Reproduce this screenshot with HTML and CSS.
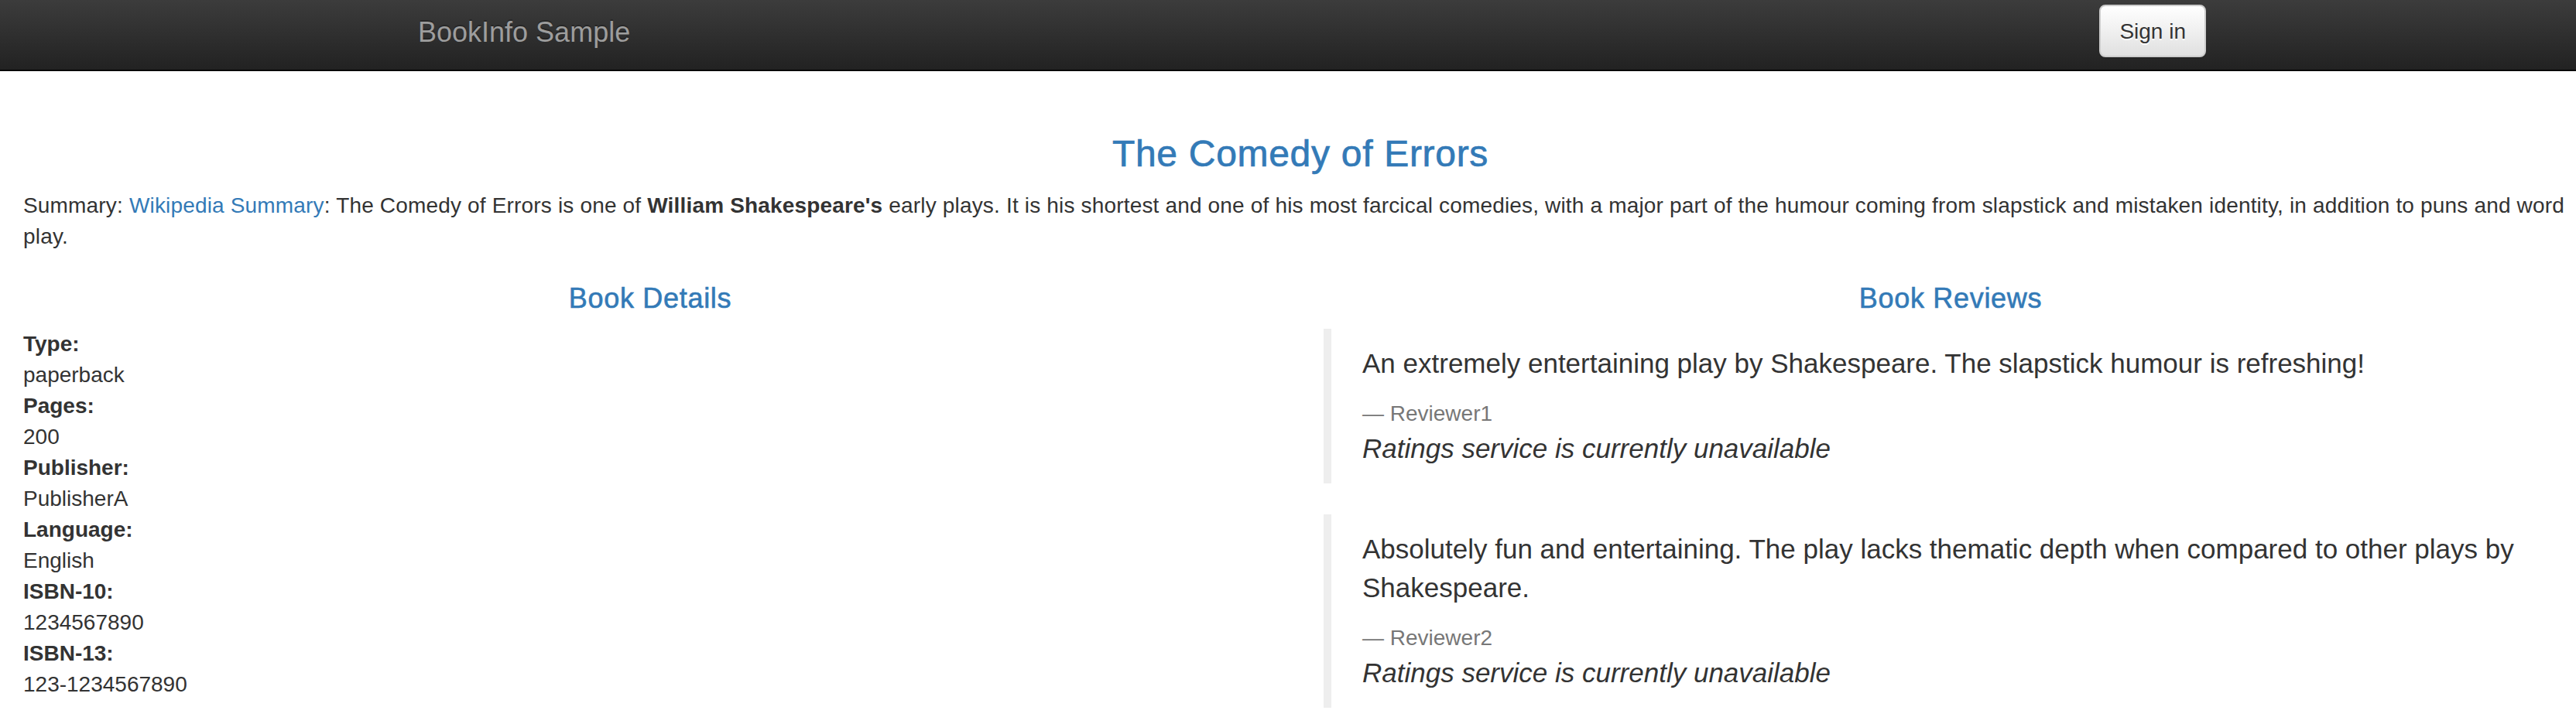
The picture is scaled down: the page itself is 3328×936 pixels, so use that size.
FILE: index.html
```html
<!DOCTYPE html>
<html lang="en">
<head>
<meta charset="utf-8">
<title>Simple Bookstore App</title>
<link rel="stylesheet" href="styles.css">
</head>
<body>
<nav class="navbar">
  <div class="nav-container">
    <a class="navbar-brand" href="#">BookInfo Sample</a>
    <button type="button" class="btn-signin">Sign in</button>
  </div>
</nav>
<main class="page">
  <section class="intro">
    <h3 class="title">The Comedy of Errors</h3>
    <p class="summary">Summary: <a href="#">Wikipedia Summary</a>: The Comedy of Errors is one of <b>William Shakespeare's</b> early plays. It is his shortest and one of his most farcical comedies, with a major part of the humour coming from slapstick and mistaken identity, in addition to puns and word play.</p>
  </section>
  <div class="columns">
    <section class="details">
      <h4 class="section-title">Book Details</h4>
      <dl class="detail-list">
        <dt>Type:</dt><dd>paperback</dd>
        <dt>Pages:</dt><dd>200</dd>
        <dt>Publisher:</dt><dd>PublisherA</dd>
        <dt>Language:</dt><dd>English</dd>
        <dt>ISBN-10:</dt><dd>1234567890</dd>
        <dt>ISBN-13:</dt><dd>123-1234567890</dd>
      </dl>
    </section>
    <section class="reviews">
      <h4 class="section-title">Book Reviews</h4>
      <blockquote class="review">
        <p>An extremely entertaining play by Shakespeare. The slapstick humour is refreshing!</p>
        <small class="reviewer">Reviewer1</small>
        <p class="rating"><i>Ratings service is currently unavailable</i></p>
      </blockquote>
      <blockquote class="review">
        <p>Absolutely fun and entertaining. The play lacks thematic depth when compared to other plays by Shakespeare.</p>
        <small class="reviewer">Reviewer2</small>
        <p class="rating"><i>Ratings service is currently unavailable</i></p>
      </blockquote>
    </section>
  </div>
</main>
</body>
</html>
```
FILE: styles.css
```css
html {
  overflow: hidden;
}

body {
  margin: 0;
  width: 3360px;
  font-family: "Liberation Sans", Arial, Helvetica, sans-serif;
  font-size: 28px;
  line-height: 40px;
  color: #333;
  background: #fff;
}

.navbar {
  height: 90px;
  border-bottom: 2px solid #080808;
  background: linear-gradient(to bottom, #3c3c3c 0, #222 100%);
}

.nav-container {
  width: 2340px;
  margin: 0 auto;
  display: flex;
  justify-content: space-between;
  align-items: flex-start;
}

.navbar-brand {
  padding: 22px 30px 0;
  font-size: 36px;
  line-height: 40px;
  color: #9d9d9d;
  text-decoration: none;
  text-shadow: 0 -2px 0 rgba(0, 0, 0, 0.25);
}

.btn-signin {
  margin-top: 6px;
  padding: 13px 24px 11px;
  font-family: inherit;
  font-size: 28px;
  line-height: 40px;
  color: #333;
  background: linear-gradient(to bottom, #fff 0, #e0e0e0 100%);
  border: 2px solid #ccc;
  border-radius: 8px;
  text-shadow: 0 2px 0 #fff;
  box-shadow: inset 0 2px 0 rgba(255, 255, 255, 0.15), 0 2px 2px rgba(0, 0, 0, 0.075);
}

.page {
  padding: 81px 30px 0;
}

.title {
  margin: 0 0 20px;
  font-size: 48px;
  line-height: 1.1;
  font-weight: 500;
  letter-spacing: 0.7px;
  -webkit-text-stroke: 0.7px #337ab7;
  text-align: center;
  color: #337ab7;
}

.summary {
  margin: 0 0 20px;
  letter-spacing: 0.17px;
}

.summary a {
  color: #337ab7;
  text-decoration: none;
}

.columns {
  display: grid;
  grid-template-columns: minmax(0, 1fr) minmax(0, 1fr);
  column-gap: 60px;
}

.section-title {
  margin: 20px 0;
  font-size: 36px;
  line-height: 1.1;
  font-weight: 500;
  letter-spacing: 0.7px;
  -webkit-text-stroke: 0.6px #337ab7;
  text-align: center;
  color: #337ab7;
}

.detail-list {
  margin: 0 0 40px;
}

.detail-list dt {
  font-weight: 700;
}

.detail-list dd {
  margin: 0;
}

.review {
  margin: 0 0 40px;
  padding: 20px 40px;
  border-left: 10px solid #eee;
  font-size: 35px;
  line-height: 50px;
}

.review p {
  margin: 0 0 20px;
}

.review p:last-child {
  margin-bottom: 0;
}

.reviewer {
  display: block;
  font-size: 28px;
  line-height: 40px;
  color: #777;
}

.reviewer::before {
  content: "\2014\00A0";
}
```
